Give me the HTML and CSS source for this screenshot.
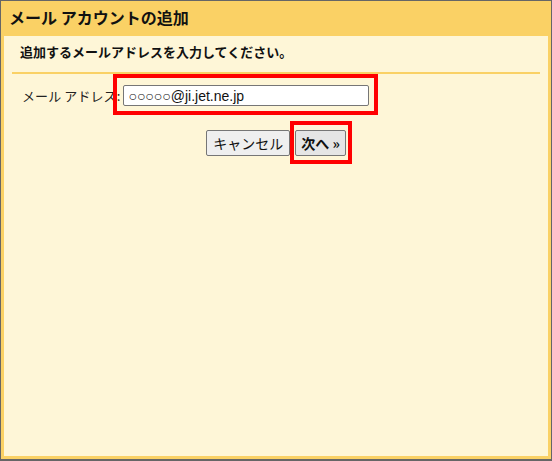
FILE: index.html
```html
<!DOCTYPE html>
<html lang="ja">
<head>
    <meta charset="UTF-8">
    <title>メール アカウントの追加</title>
    <link rel="stylesheet" href="styles.css">
</head>
<body>

<div class="dialog">
    <div class="dialog-head">メール アカウントの追加</div>
    <div class="dialog-body">
        <p class="lead">追加するメールアドレスを入力してください。</p>
        <form class="add-form">
            <div class="field">
                <label for="email">メール アドレス:</label>
                <span class="mark mark-input">
                    <input type="text" id="email" value="○○○○○@ji.jet.ne.jp">
                </span>
            </div>
            <div class="actions">
                <button type="button" class="btn">キャンセル</button>
                <span class="mark mark-btn">
                    <button type="submit" class="btn btn-next">次へ &raquo;</button>
                </span>
            </div>
        </form>
    </div>
</div>

</body>
</html>
```

FILE: styles.css
```css
html, body {
    margin: 0;
    height: 100%;
}
body {
    font-family: "Noto Sans CJK JP", "Liberation Sans", sans-serif;
    background: #666;
}
.dialog {
    box-sizing: border-box;
    height: 100%;
    border: 1px solid #666;
    border-bottom-width: 2px;
    background: #fef6d7;
    display: flex;
    flex-direction: column;
}
.dialog-head {
    background: #fad165;
    height: 35px;
    line-height: 33px;
    padding-left: 8px;
    font-size: 16px;
    font-weight: bold;
    color: #111;
}
.dialog-body {
    flex: 1;
    border: 3px solid #fad165;
    border-top: none;
    padding: 0 8px;
}
.lead {
    margin: 0;
    padding: 5px 8px 0;
    height: 31px;
    line-height: 22px;
    font-size: 13px;
    font-weight: bold;
    color: #111;
    border-bottom: 2px solid #fad165;
}
.field {
    display: flex;
    align-items: center;
    padding: 11px 0 0 10px;
    font-size: 13px;
}
.field label {
    color: #222;
    margin-right: 3px;
    letter-spacing: 0.1px;
}
.field input {
    width: 246px;
    height: 21px;
    box-sizing: border-box;
    border: 1px solid #767676;
    border-radius: 2px;
    padding: 0 4px;
    font-family: "Liberation Sans", Arial, sans-serif;
    font-size: 14px;
    color: #111;
    background: #fff;
}
.mark {
    position: relative;
    display: inline-flex;
}
.mark::after {
    content: "";
    position: absolute;
    border: 4px solid #f00;
    pointer-events: none;
}
.mark-input::after {
    left: -10px;
    right: -9px;
    top: -11px;
    bottom: -9px;
}
.mark-btn::after {
    left: -5px;
    right: -6px;
    top: -9px;
    bottom: -8px;
}
.actions {
    display: flex;
    justify-content: center;
    gap: 5px;
    margin-top: 24px;
}
.btn {
    height: 26px;
    padding: 0 6px;
    font-family: "Noto Sans CJK JP", "Liberation Sans", sans-serif;
    font-size: 14px;
    color: #111;
    background: #efefef;
    border: 1px solid #767676;
    border-radius: 2px;
}
.btn-next {
    font-weight: bold;
    background: #e5e5e5;
    padding: 0 5px;
}
```
